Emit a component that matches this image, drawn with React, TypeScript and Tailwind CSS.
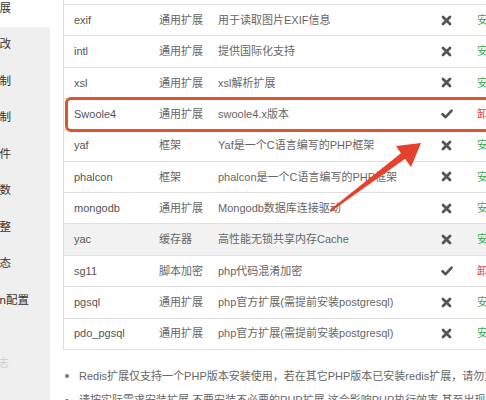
import { Fragment } from 'react';

const font = "font-['Liberation_Sans','Noto_Sans_CJK_SC',sans-serif]";

const menu = ['安装扩展', '配置修改', '上传限制', '超时限制', '配置文件', '禁用函数', '性能调整', '负载状态', 'Session配置'];

const rows = [
  { name: 'fileinfo', type: '通用扩展', desc: '文件类型识别', installed: false },
  { name: 'exif', type: '通用扩展', desc: '用于读取图片EXIF信息', installed: false },
  { name: 'intl', type: '通用扩展', desc: '提供国际化支持', installed: false },
  { name: 'xsl', type: '通用扩展', desc: 'xsl解析扩展', installed: false },
  { name: 'Swoole4', type: '通用扩展', desc: 'swoole4.x版本', installed: true },
  { name: 'yaf', type: '框架', desc: 'Yaf是一个C语言编写的PHP框架', installed: false },
  { name: 'phalcon', type: '框架', desc: 'phalcon是一个C语言编写的PHP框架', installed: false },
  { name: 'mongodb', type: '通用扩展', desc: 'Mongodb数据库连接驱动', installed: false },
  { name: 'yac', type: '缓存器', desc: '高性能无锁共享内存Cache', installed: false, hover: true },
  { name: 'sg11', type: '脚本加密', desc: 'php代码混淆加密', installed: true },
  { name: 'pgsql', type: '通用扩展', desc: 'php官方扩展(需提前安装postgresql)', installed: false },
  { name: 'pdo_pgsql', type: '通用扩展', desc: 'php官方扩展(需提前安装postgresql)', installed: false },
];

function Cross() {
  return (
    <svg width="11" height="11" viewBox="0 0 11 11">
      <path d="M2 2 L9 9 M9 2 L2 9" stroke="#555" strokeWidth="2.8" strokeLinecap="round" />
    </svg>
  );
}

function Check() {
  return (
    <svg width="12" height="10" viewBox="0 0 12 10">
      <path d="M1.5 5.2 L4.6 8.2 L10.6 1.6" stroke="#555" strokeWidth="2.6" fill="none" strokeLinecap="round" strokeLinejoin="round" />
    </svg>
  );
}

export default function App() {
  return (
    <div className={`relative w-[486px] h-[400px] overflow-hidden bg-white flex ${font}`}>
      {/* left menu, scrolled so only the ends show */}
      <div className="w-[50px] shrink-0 bg-[#efefef] overflow-hidden">
        <div className="-mt-[10px] -ml-[35px] w-[85px]">
          {menu.map((m, i) => (
            <div
              key={m}
              className={`h-[36.5px] flex items-center text-[11.5px] text-[#333] whitespace-nowrap ${i === 0 ? 'bg-white' : ''}`}
            >
              {m}
            </div>
          ))}
          <div className="mt-[26px] h-[36.5px] flex items-center text-[11px] text-[#ccc] whitespace-nowrap">错误日志</div>
        </div>
      </div>

      {/* main */}
      <div className="pl-[13px] shrink-0">
        <div className="-mt-[26.4px] w-[470px] border-l border-[#ddd] text-[11px] text-[#666]">
          <div className="grid grid-cols-[85px_59px_218px_41px_67px]">
            {rows.map((r) => (
              <Fragment key={r.name}>
                <div className={`h-[31.36px] border-b border-[#e0e0e0] flex items-center pl-[10px] text-[#555] ${r.hover ? 'bg-[#f2f2f2]' : ''}`}>{r.name}</div>
                <div className={`h-[31.36px] border-b border-[#e0e0e0] flex items-center pl-[10px] ${r.hover ? 'bg-[#f2f2f2]' : ''}`}>{r.type}</div>
                <div className={`h-[31.36px] border-b border-[#e0e0e0] flex items-center pl-[10px] whitespace-nowrap ${r.hover ? 'bg-[#f2f2f2]' : ''}`}>{r.desc}</div>
                <div className={`h-[31.36px] border-b border-[#e0e0e0] flex items-center justify-center ${r.hover ? 'bg-[#f2f2f2]' : ''}`}>
                  {r.installed ? <Check /> : <Cross />}
                </div>
                <div className={`h-[31.36px] border-b border-[#e0e0e0] flex items-center pl-[10px] ${r.installed ? 'text-[#e5463a]' : 'text-[#3fa34d]'} ${r.hover ? 'bg-[#f2f2f2]' : ''}`}>
                  {r.installed ? '卸载' : '安装'}
                </div>
              </Fragment>
            ))}
          </div>
        </div>

        <ul className="mt-[18px] ml-[2px] text-[11px] text-[#666] space-y-[8px] w-[520px]">
          <li className="flex items-center gap-[10px] whitespace-nowrap">
            <span className="w-[4px] h-[4px] rounded-full bg-[#777]" />
            Redis扩展仅支持一个PHP版本安装使用，若在其它PHP版本已安装redis扩展，请勿重复安装
          </li>
          <li className="flex items-center gap-[10px] whitespace-nowrap">
            <span className="w-[4px] h-[4px] rounded-full bg-[#777]" />
            请按实际需求安装扩展,不要安装不必要的PHP扩展,这会影响PHP执行效率,甚至出现异常
          </li>
        </ul>
      </div>

      {/* annotation: highlight box */}
      <div className="absolute left-[65px] top-[97px] w-[440px] h-[35px] border-[3px] border-[#e0532f] rounded-[6px]" />

      {/* annotation: arrow */}
      <svg className="absolute left-0 top-0" width="486" height="400" viewBox="0 0 486 400">
        <polygon
          points="329.4,210.2 400.9,153.2 396,146 421,143 411,167 405.1,158.8 330.6,211.8"
          fill="#e5412d"
        />
      </svg>
    </div>
  );
}
